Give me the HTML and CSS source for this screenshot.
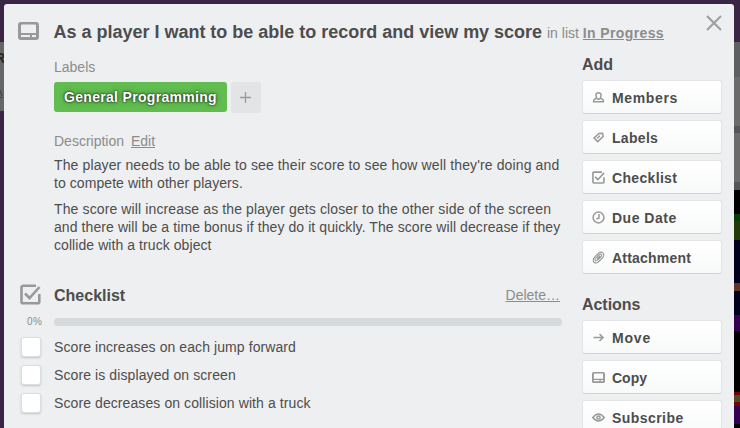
FILE: index.html
```html
<!DOCTYPE html>
<html lang="en">
<head>
<meta charset="utf-8">
<title>Card details</title>
<link rel="stylesheet" href="styles.css">
</head>
<body>
<svg class="defs" aria-hidden="true">
  <symbol id="card" viewBox="0 0 21 18"><path fill-rule="evenodd" d="M3 0H18Q21 0 21 3V15Q21 18 18 18H3Q0 18 0 15V3Q0 0 3 0ZM4 2.5Q3 2.5 3 3.5V11H18V3.5Q18 2.5 17 2.5ZM3 13V15H12V13ZM14 13V15H18V13Z"/></symbol>
  <symbol id="check" viewBox="0 0 21 21"><path fill="none" stroke="currentColor" stroke-width="2.6" d="M16 1.8H3.2Q1.5 1.8 1.5 3.5V17.8Q1.5 19.3 3 19.3H17.8Q19.3 19.3 19.3 17.8V10M5 9.5L9.5 14L19.5 3"/></symbol>
</svg>
<div class="screen">
  <div class="board-left"><span class="peek">R</span><span class="peek-link">A</span></div>
  <main class="window">
    <svg class="close" viewBox="0 0 16 16"><path d="M1 1L15 15M15 1L1 15"/></svg>
    <header class="header">
      <svg class="head-icon"><use href="#card"/></svg>
      <h1>As a player I want to be able to record and view my score</h1>
      <span class="in-list">in list <a>In Progress</a></span>
    </header>
    <div class="columns">
      <section class="details">
        <div class="caption">Labels</div>
        <div class="labels"><span class="label">General Programming</span><span class="add"><svg viewBox="0 0 11 11"><path d="M5.5 0V11M0 5.5H11"/></svg></span></div>
        <div class="caption desc">Description <a class="edit">Edit</a></div>
        <p><span class="l1">The player needs to be able to see their score to see how well they're doing and</span><br><span class="l2">to compete with other players.</span></p>
        <p><span class="l3">The score will increase as the player gets closer to the other side of the screen</span><br><span class="l4">and there will be a time bonus if they do it quickly. The score will decrease if they</span><br><span class="l5">collide with a truck object</span></p>
        <div class="check-head"><svg class="check-icon"><use href="#check"/></svg><h2>Checklist</h2><a>Delete…</a></div>
        <div class="progress"><span>0%</span><div class="bar"></div></div>
        <div class="item"><i class="box"></i><span class="i1">Score increases on each jump forward</span></div>
        <div class="item"><i class="box"></i><span class="i2">Score is displayed on screen</span></div>
        <div class="item"><i class="box"></i><span class="i3">Score decreases on collision with a truck</span></div>
      </section>
      <aside class="side">
        <h2>Add</h2>
        <a class="button"><svg viewBox="0 0 13 13"><path d="M4.7 7Q3.4 3.8 4.4 2.6Q6.5 .8 8.6 2.6Q9.6 3.8 8.3 7L10.6 8.4Q11.5 9 11.4 10.8H1.6Q1.5 9 2.4 8.4ZM4.7 7.4Q6.5 9 8.3 7.4"/></svg><span class="members">Members</span></a>
        <a class="button"><svg viewBox="0 0 13 13"><path d="M2 7L7 2.4L10.5 2.2L11.2 5.5L5.7 10.6Z"/><path d="M5 7.5L8 4.8"/></svg><span class="tags">Labels</span></a>
        <a class="button"><svg class="wide"><use href="#check"/></svg><span class="checks">Checklist</span></a>
        <a class="button"><svg viewBox="0 0 13 13"><circle cx="6.5" cy="6.5" r="5.4"/><path d="M7 3V7L4.5 8"/></svg><span class="due">Due Date</span></a>
        <a class="button"><svg viewBox="0 0 13 13"><path class="thin" d="M3.5 7.4L7.4 3.5Q9 2.5 9.5 4Q9.8 5 8.8 6L5.3 9.4Q3.8 10.3 3.2 9.2M5 8L8 5M3.2 9.2Q2.6 8.2 3.5 7.4M2.5 6.2L7 1.8Q9.7 .2 11.2 2.3Q12.5 4.3 10.8 6.6L6.3 11Q3.8 13 1.8 11Q.3 8.7 2.5 6.2"/></svg><span class="attach">Attachment</span></a>
        <h2 class="actions">Actions</h2>
        <a class="button"><svg viewBox="0 0 13 13"><path d="M1.5 6.5H11M7.5 3L11 6.5L7.5 10"/></svg><span class="move">Move</span></a>
        <a class="button"><svg class="wide"><use href="#card"/></svg><span class="copy">Copy</span></a>
        <a class="button"><svg viewBox="0 0 13 13"><path d="M.8 6.5Q3.5 3 6.5 3Q9.5 3 12.2 6.5Q9.5 10 6.5 10Q3.5 10 .8 6.5Z"/><circle cx="6.5" cy="6.5" r="1.6"/></svg><span class="subscribe">Subscribe</span></a>
      </aside>
    </div>
  </main>
  <div class="board-right"></div>
</div>
</body>
</html>
```
FILE: styles.css
```css
* { box-sizing: border-box; }
body { margin: 0; overflow: hidden; background: #3a2544; color: #4d4d4d; font: 14px/18px "Liberation Sans", Arial, sans-serif; }
.defs { display: none; }
.screen { display: grid; grid-template-columns: 4px 730px 6px; height: 428px; overflow: hidden; }
.window { position: relative; margin-top: 4px; height: 440px; background: #edeff0; border-radius: 3px 3px 0 0; }
.board-left { overflow: hidden; background: linear-gradient(#3a2544 42px, #666 42px 111px, #3a2544 111px); }
.peek { display: block; margin: 49px 0 0 -5px; font-weight: bold; line-height: 18px; color: #292929; }
.peek-link { display: block; margin: 16px 0 0 -6px; font-size: 13px; color: #444; text-decoration: underline; }
.board-right { background: linear-gradient(#3a2544 42px, #5e5f62 42px 77px, #6b6b6b 77px 126px, #55565a 126px 133px, #6b6b6b 133px 182px, #55565a 182px 190px, #000 190px 214px, #073c05 214px 221px, #24390a 221px 240px, #00001e 240px 283px, #603228 283px 291px, #00001e 291px 315px, #350052 315px 331px, #000 331px 392px, #770007 392px 395px, #4c4a27 395px 402px, #770007 402px 406px, #350052 406px 424px, #000 424px); }
.close { position: absolute; right: 12px; top: 11px; width: 16px; height: 16px; fill: none; stroke: #a0a0a0; stroke-width: 2.2; }
.header { display: flex; align-items: baseline; height: 50px; padding: 17px 0 0 14px; white-space: nowrap; }
.head-icon { align-self: flex-start; margin-top: 1px; width: 21px; height: 18px; fill: #999; }
h1 { width: 489px; margin: 0 4px 0 15px; font-size: 18px; line-height: 22px; letter-spacing: -.01px; text-indent: -.5px; }
.in-list { color: #8c8c8c; }
a { color: #8c8c8c; text-decoration: underline; }
.in-list a { font-weight: bold; letter-spacing: .38px; }
.columns { display: grid; grid-template-columns: 508px 140px; column-gap: 20px; padding-left: 50px; }
.details { white-space: nowrap; }
.caption { margin-top: 4px; color: #8c8c8c; }
.labels { display: flex; gap: 4px; margin-top: 6px; }
.label { width: 173px; height: 30px; padding-left: 10px; border-radius: 3px; background: #61bd4f; color: #fff; font-weight: bold; line-height: 30px; letter-spacing: .31px; text-shadow: 0 0 5px rgba(0,0,0,.5), 0 0 2px #000; }
.add { width: 30px; height: 31px; padding: 10px 9px; border-radius: 3px; background: #e2e4e6; }
.add svg { display: block; width: 11px; height: 11px; stroke: #999; stroke-width: 1.3; }
.desc { margin: 19px 0 6px; }
.edit { margin-left: 3px; }
p { margin: 0 0 8px; }
.l1 { letter-spacing: .125px; }
.l2 { letter-spacing: .07px; }
.l3 { letter-spacing: .123px; }
.l4 { letter-spacing: .085px; }
.l5 { letter-spacing: .07px; }
.check-head { display: flex; align-items: center; margin: 29px 2px 0 -34px; height: 24px; }
.check-icon { width: 21px; height: 21px; margin-top: -2px; color: #999; }
h2 { margin: 0; font-size: 16px; line-height: 20px; }
.check-head h2 { flex: 1; margin: 2px 0 0 13px; }
.progress { display: flex; align-items: center; margin: 7px 0 3px -27px; height: 16px; }
.progress span { width: 27px; font-size: 10px; letter-spacing: .4px; color: #8c8c8c; }
.bar { flex: 1; height: 8px; border-radius: 4px; background: #d6dadc; }
.item { display: flex; align-items: center; gap: 13px; height: 28px; margin-left: -33px; }
.i1 { letter-spacing: .085px; }
.i2 { letter-spacing: .1px; }
.i3 { letter-spacing: .09px; }
.box { width: 20px; height: 20px; border: 1px solid #dcdfe0; border-radius: 3px; background: #fff; box-shadow: 0 1px 2px #bfc4c7; }
.side h2 { height: 26px; padding-top: 1px; }
.side h2.actions { margin-top: 20px; letter-spacing: -.05px; }
.button { display: flex; align-items: center; gap: 7px; height: 34px; margin-bottom: 6px; padding-left: 10px; border: 1px solid #e2e4e6; border-bottom-color: #cdd2d4; border-radius: 3px; background: linear-gradient(#fff, #f8f9f9); color: #4d4d4d; font-weight: bold; text-decoration: none; }
.button span { padding-top: 2px; }
.button svg { width: 13px; height: 13px; margin: 1px 0 0 -1px; fill: none; stroke: #999; stroke-width: 1.5; }
.button .wide { fill: #999; stroke: none; color: #999; }
.button .thin { stroke-width: 1.1; }
.members { letter-spacing: .65px; }
.tags { letter-spacing: .3px; }
.checks { letter-spacing: .33px; }
.due { letter-spacing: .5px; }
.attach { letter-spacing: .2px; }
.move { letter-spacing: .8px; }
.subscribe { letter-spacing: .44px; }
```
